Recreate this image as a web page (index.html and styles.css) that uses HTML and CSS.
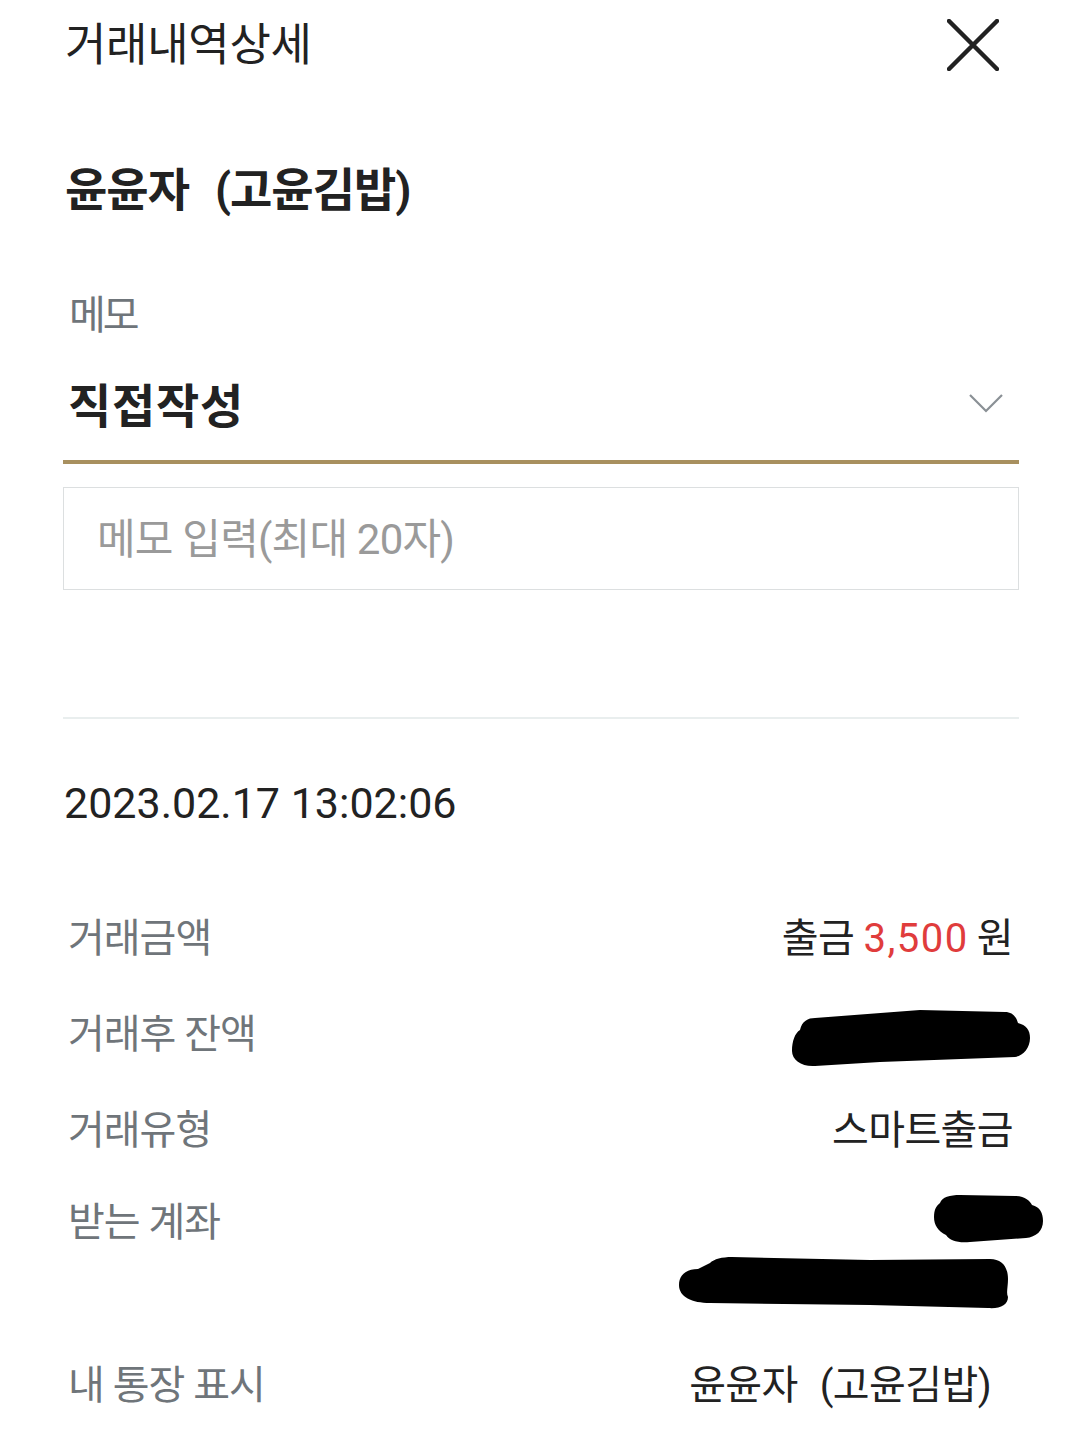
FILE: index.html
```html
<!DOCTYPE html>
<html lang="ko">
<head>
    <meta charset="UTF-8">
    <meta name="viewport" content="width=device-width, initial-scale=1.0">
    <title>거래내역상세</title>
    <link rel="stylesheet" href="styles.css">
</head>
<body>
    <header class="top">
        <h1 class="title">거래내역상세</h1>
        <button class="close" aria-label="닫기">
            <svg width="52" height="52" viewBox="0 0 52 52">
                <path d="M2 2 L50 50 M50 2 L2 50" stroke="#222" stroke-width="4.5" stroke-linecap="round" fill="none"/>
            </svg>
        </button>
    </header>

    <h2 class="payee">윤윤자<span class="gap"></span>(고윤김밥)</h2>

    <section class="memo">
        <div class="memo-label">메모</div>
        <div class="memo-select">
            <span>직접작성</span>
            <svg class="chevron" width="36" height="20" viewBox="0 0 36 20">
                <path d="M2 2 L18 18 L34 2" stroke="#8a9095" stroke-width="2.2" fill="none"/>
            </svg>
        </div>
        <div class="memo-input">메모 입력(최대 20자)</div>
    </section>

    <hr class="divider">

    <div class="date">2023.02.17 13:02:06</div>

    <div class="details">
        <div class="row">
            <span class="label">거래금액</span>
            <span class="value">출금 <em class="amount">3,500</em>원</span>
        </div>
        <div class="row">
            <span class="label">거래후 잔액</span>
            <svg class="redact redact-balance" width="265" height="96" viewBox="0 0 265 96">
                <path d="M20 47 C22 38 28 35 35 35 L140 27 L225 29 C232 29 236 33 238 40 C246 42 250 47 250 55 C250 65 243 73 235 74 L100 79 L35 83 C22 84 12 77 12 68 C12 58 15 50 20 47 Z" fill="#000"/>
            </svg>
        </div>
        <div class="row">
            <span class="label">거래유형</span>
            <span class="value">스마트출금</span>
        </div>
        <div class="row row-account">
            <span class="label">받는 계좌</span>
            <svg class="redact redact-account" width="378" height="159" viewBox="0 0 378 159">
                <path d="M270 28 C272 22 280 20 290 20 L345 21 C355 21 360 26 362 30 C370 32 373 38 373 46 C373 56 366 62 356 63 L300 67 C288 68 280 66 276 60 C268 56 264 50 264 42 C264 35 266 31 270 28 Z" fill="#000"/>
                <path d="M40 88 C44 84 52 82 62 82 L200 85 L320 84 C332 84 338 92 338 104 C338 112 336 118 338 122 C338 130 330 134 318 133 L200 130 L40 128 C22 128 9 122 9 110 C9 100 16 94 28 94 C32 92 36 90 40 88 Z" fill="#000"/>
            </svg>
        </div>
        <div class="row">
            <span class="label">내 통장 표시</span>
            <span class="value value-name">윤윤자<span class="gap gap-small"></span>(고윤김밥)</span>
        </div>
    </div>
</body>
</html>
```

FILE: styles.css
```css
body {
    margin: 0;
    padding: 0 61px 0 63px;
    background: #fff;
    color: #222;
    font-family: Roboto, "Noto Sans CJK KR", sans-serif;
}

.top {
    display: flex;
    justify-content: space-between;
    align-items: center;
    height: 92px;
}

.title {
    margin: 0 0 0 2px;
    font-size: 45px;
    font-weight: 400;
    letter-spacing: -0.3px;
    line-height: 60px;
    color: #222;
}

.close {
    border: none;
    background: none;
    padding: 0;
    margin: -2px 20px 0 0;
    width: 52px;
    height: 52px;
    cursor: pointer;
}

.payee {
    margin: 68px 0 0 2px;
    font-size: 46px;
    font-weight: 700;
    letter-spacing: -1px;
    line-height: 60px;
}

.gap {
    display: inline-block;
    width: 26px;
}

.gap-small {
    width: 22px;
}

.memo-label {
    margin: 71px 0 0 6px;
    font-size: 40px;
    letter-spacing: -3px;
    line-height: 50px;
    color: #6f757a;
}

.memo-select {
    display: flex;
    justify-content: space-between;
    align-items: center;
    height: 115px;
    padding-top: 4px;
    border-bottom: 4px solid #a8905f;
}

.memo-select span {
    margin-left: 5px;
    font-size: 47px;
    font-weight: 700;
    letter-spacing: 0.8px;
}

.chevron {
    margin-right: 15px;
}

.memo-input {
    margin-top: 23px;
    height: 95px;
    padding: 0 0 6px 33px;
    display: flex;
    align-items: center;
    border: 1px solid #dcdfe0;
    font-size: 42px;
    letter-spacing: -0.8px;
    color: #9a9a9a;
}

.divider {
    margin: 127px 0 0;
    border: none;
    border-top: 2px solid #e9eeee;
}

.date {
    margin: 59px 0 0 1px;
    font-family: Roboto, sans-serif;
    font-size: 43px;
    line-height: 50px;
    color: #222;
}

.details {
    margin-top: 59px;
    padding: 0 6px 0 5px;
}

.row {
    display: flex;
    justify-content: space-between;
    align-items: center;
    height: 96px;
}

.row-account {
    align-items: flex-start;
    height: 159px;
    line-height: 96px;
}

.label {
    font-size: 40px;
    letter-spacing: -1px;
    color: #6f757a;
}

.value {
    font-size: 40px;
    letter-spacing: -0.6px;
    color: #222;
}

.amount {
    font-style: normal;
    font-family: Roboto, sans-serif;
    letter-spacing: 1.5px;
    margin-right: 8px;
    color: #e03c3c;
}

.value-name {
    margin-right: 22px;
}

.redact-balance {
    margin-right: -32px;
}

.redact-account {
    margin-right: -35px;
}
```
